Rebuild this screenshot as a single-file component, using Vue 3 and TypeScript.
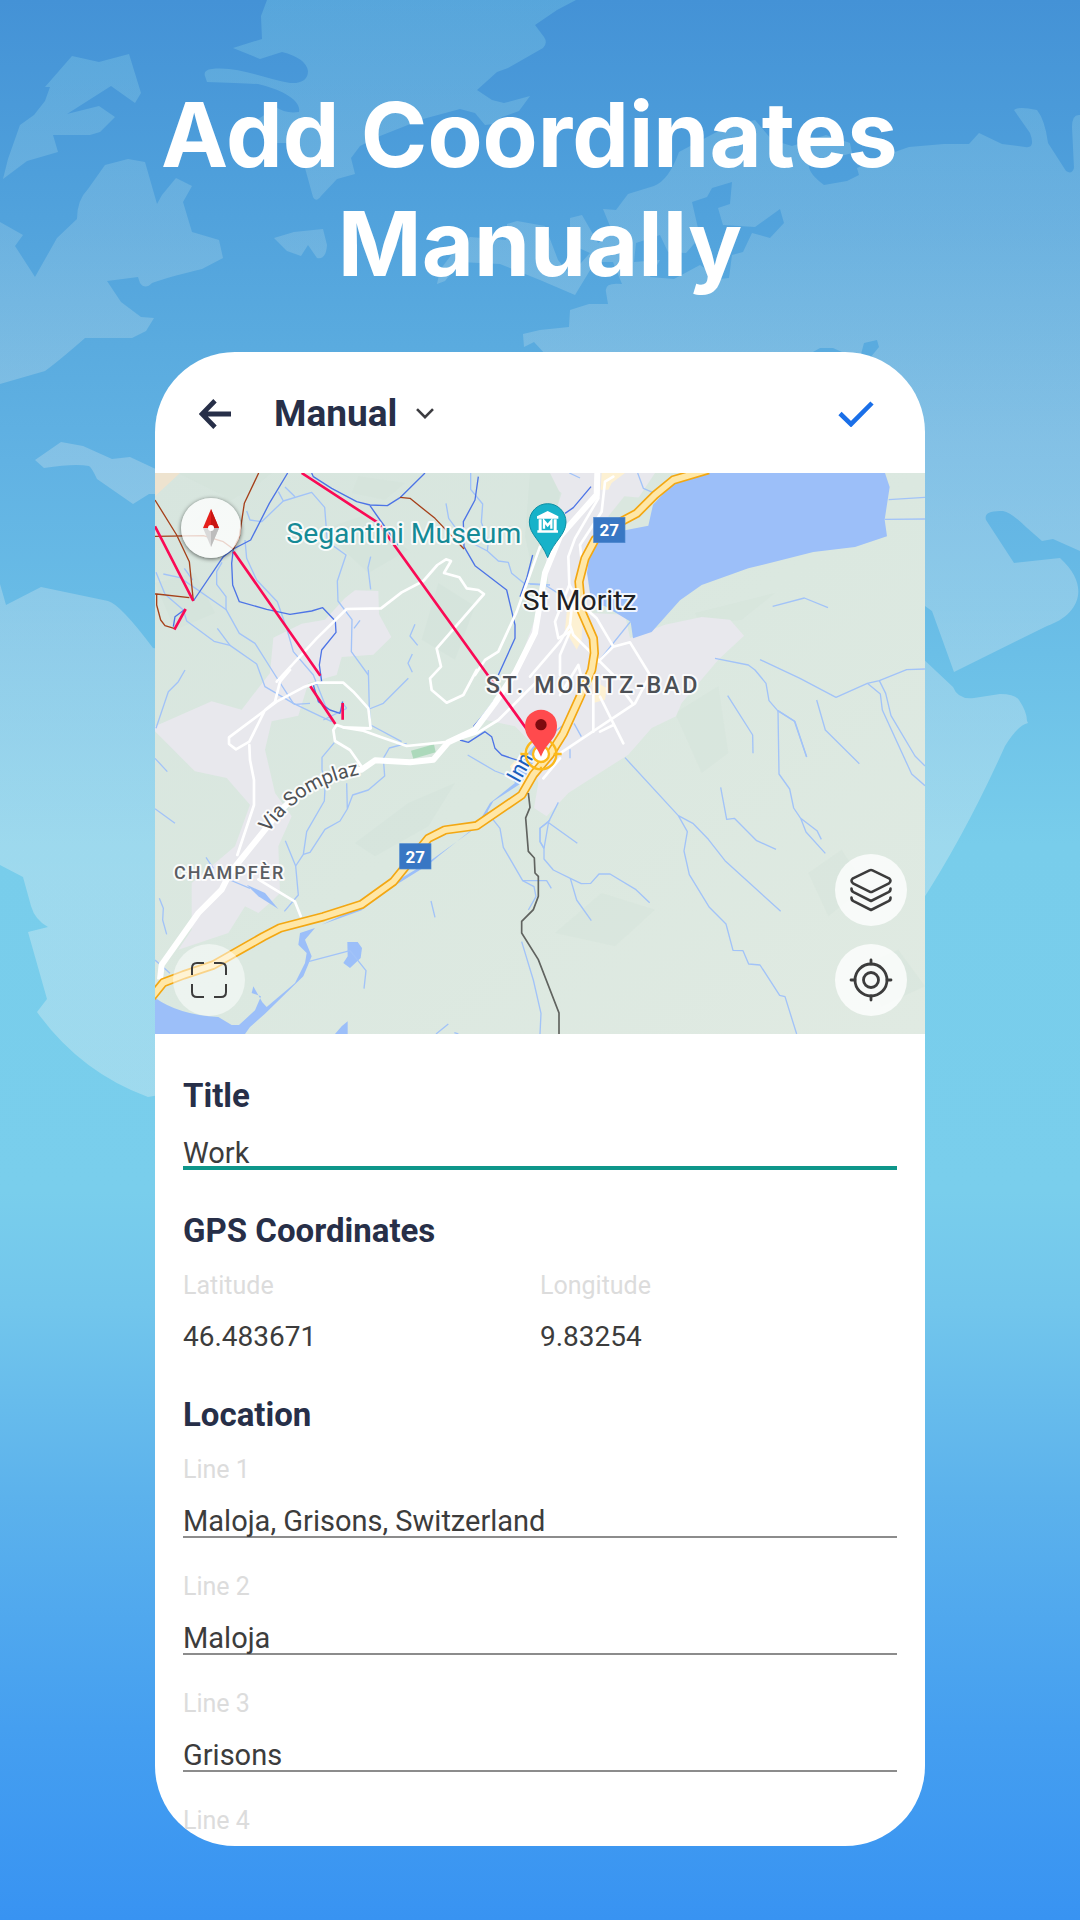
<script setup lang="ts">
import { ref } from 'vue'

interface LocationLine {
  id: string
  label: string
  value: string
}

interface Tile {
  x: number
  y: number
  paths: string[]
}

const mode = ref('Manual')
const title = ref('Work')
const latitude = ref('46.483671')
const longitude = ref('9.83254')

const lines = ref<LocationLine[]>([
  { id: 'line-1', label: 'Line 1', value: 'Maloja, Grisons, Switzerland' },
  { id: 'line-2', label: 'Line 2', value: 'Maloja' },
  { id: 'line-3', label: 'Line 3', value: 'Grisons' },
  { id: 'line-4', label: 'Line 4', value: '' },
])

// Map geometry is kept in four quadrants, each with its own origin.
const streams: Tile[] = [
  {
    x: -15,
    y: -384,
    paths: [
      'M290,498 300,525 335,530 400,468 485,442 524,487 532,590 588,630 562,708 564,768 606,824 604,920 655,990',
      'M385,440 400,468M405,426 435,455M662,635 654,668 662,733M795,838 780,873 803,901M787,927 774,955 787,982M630,826 612,850',
      'M285,585 290,640 320,705 382,770 410,850 430,920 490,990 545,1130',
      'M216,652 200,680 200,718 228,755 228,793 268,865 315,895 375,990 430,1075 545,1130',
      'M40,687 90,698 230,795M18,682 45,748 100,795 110,828 192,889 240,901 320,957 345,1025 435,1078 480,1075',
      'M202,850 240,901M103,670 128,705M105,975 85,1010 55,1040 18,1150',
      'M962,384 962,433 998,477 994,532 1015,590 1012,618M888,475 896,520 940,580 1012,618 1045,648 1075,652 1085,685 1122,715 1200,720',
    ],
  },
  {
    x: 1125,
    y: -384,
    paths: [
      'M323,384 340,430 368,442M118,384 150,399M1076,464 1185,457M1064,523 1185,522M728,784 823,759 894,788',
      'M0,717 45,720 85,745M303,828 205,950M555,940 655,960 675,975 708,1015 717,1067 743,1097 795,1130 830,1236',
      'M690,944 810,1000 918,1057 1012,1015 1048,1007 1130,974 1185,972',
    ],
  },
  {
    x: -15,
    y: 591,
    paths: [
      'M655,0 658,117 700,100 775,25M658,117 662,165 755,215',
      'M553,218 516,262 516,300 526,335 523,393 470,485 460,553 437,588 445,675 403,724M590,340 592,417 570,453 525,478 480,547 460,553M592,417 608,375 655,360 704,318 700,265 718,234 770,220M406,512 437,588',
      'M15,265 52,305M15,416 75,460M28,685 40,715 38,750 50,793M168,562 190,595M240,630 300,655M843,693 855,742',
      'M475,875 600,842 648,902 642,956M953,255 1035,303 1080,320M1010,425 1050,475 1060,532 1118,632 1190,632 1204,655',
      'M1118,632 1152,650 1158,680 1135,720M1200,450 1170,475 1170,515 1182,535M1115,815 1150,930 1173,1030 1170,1092M895,1062 858,1092M913,1088 925,1092M15,870 60,910',
      'M590,115 520,150M575,95 590,115',
    ],
  },
  {
    x: 1125,
    y: 591,
    paths: [
      'M285,263 445,437 490,461 535,508 585,572 752,724M445,437 472,485 462,543 478,614 538,712 588,762 609,841 639,842 656,882 690,885 749,976 765,980 800,1092',
      'M593,77 668,195 669,250M744,122 747,312 779,357 791,414 812,445 861,482 874,508M812,445 828,486 886,550',
      'M744,122 793,153 830,261',
      'M860,90 886,180 988,281M1012,40 1051,72 1057,120 1145,312 1185,347M1048,32 1067,70 1083,137 1155,258 1185,288',
      'M572,352 590,448 613,445 680,512 738,538M85,397 56,455 42,535 42,567 70,600 121,625 154,641 182,640 207,612 240,612 318,659 359,698',
      'M121,625 140,690 184,752M56,458 142,520M56,455 30,475 30,515 42,535M120,238 120,265M132,160 154,200',
      'M145,80 100,165 55,200',
    ],
  },
]

const trails: Tile[] = [
  {
    x: -15,
    y: -384,
    paths: [
      'M413,384 358,475 302,585 250,612 220,635 130,768',
      'M250,612 245,655 248,720 268,770 350,793 420,808 485,798 518,788 556,828 558,862 515,915 508,960 515,1010 490,1020 505,1070 540,1095 570,1105 578,1070',
      'M485,384 490,395 545,430 620,470 660,480 712,482 750,458 825,384',
      'M660,482 690,525 745,600M985,395 975,465 940,530 942,605 975,662 1070,735 1095,840 1095,880 1045,990',
      'M1148,630 1130,700 1110,755M1035,1065 1000,1110 970,1145M105,793 75,815 70,845',
    ],
  },
  {
    x: 1125,
    y: -384,
    paths: ['M183,425 130,488 105,505'],
  },
  {
    x: -15,
    y: 591,
    paths: ['M930,210 955,217 1005,185 1025,200 1035,235 1055,255 1115,275'],
  },
]

const streets: Tile[] = [
  {
    x: -15,
    y: -384,
    paths: [
      'M1170,605 1100,800 1045,920 1005,945 975,990',
      'M380,1010 500,880 590,792 693,790 755,742 820,708 862,660 888,643 903,648 882,684 928,697 950,730 985,735 1002,747 860,910 873,965 840,1000 845,1035 890,1073 940,1050 980,975',
    ],
  },
  {
    x: 1125,
    y: -384,
    paths: [
      'M250,395 225,410 215,500 150,600 155,650M205,384 205,460 135,580 115,635 118,720 75,830 85,880 120,860',
      'M118,720 130,740 120,840 90,890 0,995M120,840 130,870 180,920 250,990M155,780 200,820 250,905 300,892 360,990 315,1075 90,1225M250,905 205,950',
      'M90,990 90,930 120,860M90,1050 145,960 155,1000M190,1050 190,1160M210,1055 280,1195M285,1045 310,1078M210,1160 250,1140',
    ],
  },
  {
    x: -15,
    y: 591,
    paths: [
      'M420,0 390,35 375,95 345,120 298,215 258,238 237,222 237,202 380,95 460,52 500,38 580,38 610,65 655,115 662,175 580,172 560,165 550,180 555,213 600,240 635,290',
      'M660,175 620,175M580,172 640,182 690,200 770,228 900,215 980,190 1045,150 1170,25',
      'M298,225 300,270 312,330 312,405 262,555M325,628 435,695 452,738M1180,325 1230,265',
    ],
  },
]
</script>

<template>
  <main class="page">
    <svg class="world" viewBox="0 0 1080 1920" preserveAspectRatio="xMidYMin slice" aria-hidden="true">
      <defs>
        <linearGradient id="land" gradientUnits="userSpaceOnUse" x1="0" y1="0" x2="0" y2="1100">
          <stop offset="0" stop-color="#a0f0f0" stop-opacity=".21" />
          <stop offset=".2" stop-color="#e8f8f0" stop-opacity=".17" />
          <stop offset=".4" stop-color="#fff8f0" stop-opacity=".22" />
          <stop offset=".8" stop-color="#fff8f4" stop-opacity=".28" />
          <stop offset="1" stop-color="#fff8f4" stop-opacity=".28" />
        </linearGradient>
      </defs>
      <g fill="url(#land)" fill-rule="evenodd">
        <path d="M45,87 72,56 99,62 129,54 141,93 135,103 111,86 67,114 99,106 115,117 100,132 90,135 53,135 58,152 27,161 3,179 8,159 20,125 34,115 45,101 50,87Z" />
        <path d="M0,222 23,235 15,246 35,277 57,238 77,219Q77,200 88,189L105,165 128,159 145,162 157,204 162,195 176,178 192,186 183,202 192,232 219,240 223,258 202,269Q168,277 152,283 145,290 140,283L138,277 107,281 121,302 141,317 154,318 146,331 132,338 85,338Q60,360 45,371L0,384Z" />
        <path d="M267,0 261,16 262,39 233,48 260,59 282,52Q306,58 308,71 308,84 290,83C265,79 238,66 212,69Q203,70 205,76L207,82Q240,83 258,84C280,89 302,100 299,112Q285,114 276,107L257,120 270,143 286,143 305,168 313,197Q316,203 321,196L337,179 355,174 351,158 360,146 380,136 423,119 460,109 475,113 485,125 493,124 502,117 519,111 530,96 504,103 492,100 477,90 497,72 508,68 543,48Q548,43 544,37L535,25 557,10 576,0Z" />
        <path d="M274,238 294,232 323,229 327,245Q326,260 317,258L308,245 301,256 287,251Z" />
        <path d="M1080,115Q1072,114 1072,127L1074,168Q1072,175 1066,171L1048,143Q1045,120 1037,110 1018,106 1014,110L1030,133Q1036,149 1025,147L1002,144 979,133 969,144 944,144 909,147Q896,151 884,157L857,168 859,175 847,181 824,185Q808,173 809,165L852,153 850,143 826,135 792,146 772,140 755,120 726,127 679,152Q669,180 654,186L628,194 616,210 603,209 612,231 598,243 582,215 570,218 570,244 590,253 570,275 558,260 545,226 517,221 507,224 506,240 470,237 455,250 440,270 437,284 445,281 460,262 500,264 540,280 575,295 595,262 613,262 622,284 Q604,282 606,292L608,304 589,304 570,310 569,327 540,330 523,334 524,347 534,342 547,356 650,560 925,606 932,611 954,672 1047,626C1077,616 1093,588 1060,558L1014,563 986,520Q983,510 1003,511 1012,513 1026,527L1042,541 1053,539 1080,551ZM692,202 707,197 712,188 732,182 730,204 718,208 723,225 755,227 780,209 784,223 770,238 752,233 743,252 732,255 729,278 720,279 700,265 674,279 650,277 660,260 634,262 636,243 660,235 668,252 686,253 700,237ZM813,352 820,348 833,348 842,352ZM861,354 864,343 877,340 879,347 870,358Z" />
        <path d="M35,460 61,442 83,446 112,459 130,457 160,471 160,494 149,494 133,504 97,479 Q92,468 89,466 75,463 44,468Z" />
        <path d="M0,584 6,605 41,587 108,601Q120,604 153,648L165,650 165,1094 148,1097Q80,1072 37,1012L47,999 28,932 48,927Q35,920 31,906L23,877 0,865Z" />
        <path d="M920,656 953,687Q958,700 974,698L1000,694Q1015,694 1019,700 1027,712 1027,721L1028,723Q1018,725 1005,746 965,835 920,904Z" />
      </g>
    </svg>

    <h1 class="headline">Add Coordinates&nbsp;<br />Manually</h1>

    <section class="card">
      <header class="bar">
        <button class="icon-button" type="button" aria-label="Back">
          <svg width="32" height="30" viewBox="0 0 32 30">
            <path d="M16,1.8 3,15 16,28.200M2.500,15H32" fill="none" stroke="#272f48" stroke-width="4.800" />
          </svg>
        </button>
        <div class="mode">
          <select v-model="mode" class="mode-select" aria-label="Entry mode">
            <option value="Manual">Manual</option>
          </select>
          <svg width="18" height="11" viewBox="0 0 18 11" aria-hidden="true">
            <path d="M1,1.200 9,9.200 17,1.200" fill="none" stroke="#3c3c40" stroke-width="2.600" />
          </svg>
        </div>
        <button class="icon-button confirm" type="button" aria-label="Save">
          <svg width="36" height="26" viewBox="0 0 36 26">
            <path d="M2,12.500 13,23.200 34,2" fill="none" stroke="#1a6fe8" stroke-width="4.600" />
          </svg>
        </button>
      </header>

      <div class="map">
        <svg class="map-art" viewBox="0 0 2310 1683" role="img" aria-label="Map of St Moritz">
          <defs>
            <linearGradient id="terrain" x1="0" y1="0" x2="1" y2="1">
              <stop offset="0" stop-color="#d7e5de" />
              <stop offset=".5" stop-color="#dbe8e0" />
              <stop offset="1" stop-color="#e0eae2" />
            </linearGradient>
            <path id="somplaz" d="M340,1080Q392,1010 455,965 540,910 680,895" />
          </defs>
          <rect width="2310" height="1683" fill="url(#terrain)" />

          <g fill="#cfe0d8" opacity=".3">
            <path d="M70,0 210,70 110,150 300,40 350,0ZM610,10 750,30 690,80 590,60ZM500,170 620,130 760,230 640,300ZM850,330 960,400 900,560 800,500ZM600,1110 760,990 900,930 820,1060 660,1150Z" />
            <path d="M0,330 120,300 180,420 60,470ZM1620,420 1860,360 1760,440 1640,455ZM1560,720 1690,640 1720,840 1640,900ZM1200,1380 1340,1260 1500,1310 1380,1420ZM1960,1200 2060,1130 2130,1240 2020,1330ZM2120,1480 2230,1430 2310,1540 2180,1600Z" />
          </g>

          <path d="M0,0H75L0,70Z" fill="#eee3cf" />
          <g fill="#e8e8ed">
            <path d="M355,494 440,452 510,440 570,375 600,352 670,354 672,424 709,492 655,545 560,552 545,606 460,630 430,728 350,745 330,830 360,960 410,1030 370,1120 375,1260 355,1280 310,1320 270,1300 220,1380 70,1430 110,1370 110,1230 240,1120 285,995 215,915 120,895 0,775 0,760 170,685 260,710 345,600Z" />
            <path d="M1130,0H1500L1440,90 1380,160 1300,330 1310,420 1410,425 1425,495 1530,455 1640,432 1725,440 1767,488 1690,560 1580,690 1563,730 1490,765 1420,845 1240,960 1175,1030 1137,1005 1150,930 1120,800 1080,760 990,740 1080,600 1180,330 1170,220 1220,60Z" />
          </g>
          <path d="M1125,0H1185L1215,60 1190,200 1130,280 1110,190Z" fill="#d5e4dc" />
          <path d="M1408,70 1500,78 1485,155 1395,180 1360,130Z" fill="#dae7df" />
          <path d="M1340,0H1410L1370,30 1360,50 1337,50ZM1240,370 1285,375 1280,500 1265,530 1230,470ZM1310,620 1355,645 1350,680 1315,690ZM1065,880 1110,830 1160,870 1100,950Z" fill="#fdf1d3" />
          <path d="M768,833 837,814 842,838 775,857Z" fill="#acd9bb" />

          <g fill="#9cbff9">
            <path d="M1560,24 1640,0H2190L2204,42 2189,140 2196,190 2100,222 1975,237 1780,286 1640,336 1575,382 1490,477 1434,496 1427,446 1350,400 1310,390 1296,300 1310,200 1410,172 1480,158 1494,95Z" />
            <path d="M0,1574Q70,1625 190,1632L230,1656H252L300,1612 318,1570 290,1560 295,1540 322,1588 335,1602 420,1530 450,1470 455,1440 430,1415 435,1380 480,1365 450,1400 470,1450 445,1510 330,1622 285,1662 270,1683H0Z" />
            <path d="M577,1407H608L621,1425 617,1455 585,1485 565,1470 578,1450ZM540,1683 560,1660 578,1645V1683Z" />
            <path d="M965,1058 1005,990 1080,930 1065,905 1160,790 1190,770 1100,930 1015,985 975,1055 830,1160 740,1215 620,1312 500,1355 620,1300 820,1175 850,1150Z" />
            <path d="M275,1235 330,1260 370,1308 310,1270Z" />
          </g>

          <g fill="none" stroke="#a2c3f8" stroke-width="4" stroke-linejoin="round">
            <g v-for="(tile, i) in streams" :key="i" :transform="`translate(${tile.x} ${tile.y})`">
              <path v-for="d in tile.paths" :key="d" :d="d" />
            </g>
          </g>
          <g fill="none" stroke="#4d74e6" stroke-width="4" stroke-linejoin="round">
            <g v-for="(tile, i) in trails" :key="i" :transform="`translate(${tile.x} ${tile.y})`">
              <path v-for="d in tile.paths" :key="d" :d="d" />
            </g>
          </g>
          <g fill="none" stroke="#a5401a" stroke-width="4" stroke-linejoin="round" transform="translate(-15 -384)">
            <path d="M326,384 283,475 268,575 250,612 220,590 160,572 15,574M15,465 80,570 118,650 130,768M118,758 20,747 20,780 32,825 45,842 72,850M15,747 20,747M750,457 780,460 855,520 942,612" />
          </g>
          <g fill="none" stroke="#fff" stroke-width="8" stroke-linejoin="round" stroke-linecap="round">
            <g v-for="(tile, i) in streets" :key="i" :transform="`translate(${tile.x} ${tile.y})`">
              <path v-for="d in tile.paths" :key="d" :d="d" />
            </g>
          </g>
          <g fill="none" stroke="#fff" stroke-linejoin="round">
            <path stroke-width="18" d="M15,1520 20,1475 130,1320 200,1250 225,1200 330,1070Q440,920 575,892L620,890 660,862 765,868 835,860 880,808 960,770 1020,690 1080,600 1140,480 1170,300 1215,190 1325,65 1327,0" />
          </g>

          <g fill="none" stroke-linejoin="round">
            <g stroke="#f3a712" stroke-width="28">
              <path id="highway" d="M-10,1572 25,1529 85,1506 175,1476 325,1391 375,1365 505,1331 620,1294 715,1226 820,1096 870,1071 965,1058 1100,966 1135,905 1185,845 1225,781 1275,671 1310,591 1318,541 1315,496 1280,416 1272,326 1290,256 1320,200 1400,145 1445,121 1500,66 1555,21 1660,-10" />
            </g>
            <use href="#highway" stroke="#ffe7a6" stroke-width="18" />
          </g>
          <path d="M1120,960 1125,1003 1112,1035 1120,1135 1138,1155 1140,1200 1150,1210V1270L1135,1310 1100,1345V1380L1150,1460 1212,1620V1683" fill="none" stroke="#60635f" stroke-width="5" />

          <path d="M0,160 115,384M92,408 58,470M236,236 496,608M466,640 541,753M563,690V740M440,0 670,150 1158,828" fill="none" stroke="#fa0a55" stroke-width="8" />

          <g fill="#3877c4" stroke="#4f89d0" stroke-width="2">
            <rect x="1316" y="133" width="94" height="76" />
            <rect x="734" y="1112" width="94" height="76" />
          </g>
          <g class="shield">
            <text x="1363" y="190">27</text>
            <text x="781" y="1169">27</text>
          </g>

          <g class="place">
            <text class="poi" x="394" y="210">Segantini Museum</text>
            <text class="town" x="1103" y="412">St Moritz</text>
            <text class="suburb" x="992" y="659">ST. MORITZ-BAD</text>
            <text class="village" x="57" y="1217">CHAMPFÈR</text>
            <text class="street"><textPath href="#somplaz">Via Somplaz</textPath></text>
            <text class="river" transform="translate(1092 933) rotate(-61)">Inn</text>
          </g>

          <g transform="translate(1178 147)">
            <path d="M-55,0A55,55 0 0 1 55,0C55,38 20,55 0,107 -20,55 -55,38 -55,0Z" fill="#17b2c9" stroke="#0e8ea3" stroke-width="3" />
            <path d="M-32,-10V-17L0,-33 32,-17V-10ZM-27,-8H-18V25H-27ZM18,-8H27V25H18ZM-31,25H31V32H-31Z" fill="#fff" />
            <path d="M-11,20V-3L0,10 11,-3V20" fill="none" stroke="#fff" stroke-width="7" />
          </g>

          <g transform="translate(1158 843)">
            <g fill="none" stroke="#fbb91b" stroke-width="7">
              <circle r="46" />
              <circle r="24" fill="#fff" />
              <path d="M-62,0H-38M38,0H62M0,38V48" />
            </g>
            <path d="M-48,-85A48,48 0 0 1 48,-85C48,-45 20,-40 0,8 -20,-40 -48,-45 -48,-85Z" fill="#ff4a4d" />
            <circle cy="-88" r="17" fill="#7d0b0f" />
          </g>
        </svg>

        <button class="round compass" type="button" aria-label="Compass">
          <svg width="60" height="60" viewBox="0 0 60 60">
            <path d="M30,11 38,30H22Z" fill="#e5201b" />
            <path d="M30,11 38,30H30Z" fill="#c91612" />
            <path d="M22,30H38L30,49Z" fill="#d9d9d9" />
            <path d="M30,30H38L30,49Z" fill="#bdbdbd" />
            <circle cx="30" cy="30" r="3" fill="#fff" />
          </svg>
        </button>
        <button class="round expand" type="button" aria-label="Full screen">
          <svg width="38" height="38" viewBox="0 0 38 38" fill="none" stroke="#3c3c3c" stroke-width="2">
            <path d="M2,14V7Q2,2 7,2H14M24,2H31Q36,2 36,7V14M36,23V31Q36,36 31,36H24M14,36H7Q2,36 2,31V23" />
          </svg>
        </button>
        <div class="tools">
          <button class="round" type="button" aria-label="Map layers">
            <svg width="44" height="44" viewBox="0 0 44 44" fill="none" stroke="#3c3c3c" stroke-width="2.600" stroke-linecap="round" stroke-linejoin="round">
              <path d="M20.500,2.400Q22,1.700 23.500,2.400L40,10.300Q43,12.800 40,15.300L23.500,23.600Q22,24.400 20.500,23.600L4,15.300Q1,12.800 4,10.300Z" />
              <path d="M2.500,20.500Q2.300,23 4.500,24.200L22,33 39.500,24.200Q41.700,23 41.500,20.500M2.500,29.500Q2.300,32 4.500,33.200L22,42 39.500,33.200Q41.700,32 41.500,29.500" />
            </svg>
          </button>
          <button class="round" type="button" aria-label="My location">
            <svg width="44" height="44" viewBox="0 0 44 44" fill="none" stroke="#3c3c3c" stroke-width="2.800" stroke-linecap="round">
              <circle cx="22" cy="22" r="16" />
              <circle cx="22" cy="22" r="7.500" />
              <path d="M22,2V6M22,38V42M2,22H6M38,22H42" />
            </svg>
          </button>
        </div>
      </div>

      <form class="form" @submit.prevent>
        <section class="group">
          <h2><label for="title">Title</label></h2>
          <input id="title" v-model="title" class="input active" type="text" />
        </section>

        <section class="group">
          <h2>GPS Coordinates</h2>
          <div class="pair">
            <div class="field">
              <label for="latitude">Latitude</label>
              <input id="latitude" v-model="latitude" class="input plain" type="text" />
            </div>
            <div class="field">
              <label for="longitude">Longitude</label>
              <input id="longitude" v-model="longitude" class="input plain" type="text" />
            </div>
          </div>
        </section>

        <section class="group">
          <h2>Location</h2>
          <div class="lines">
            <div v-for="line in lines" :key="line.id" class="field">
              <label :for="line.id">{{ line.label }}</label>
              <input :id="line.id" v-model="line.value" class="input" type="text" />
            </div>
          </div>
        </section>
      </form>
    </section>
  </main>
</template>

<style>
body {
  margin: 0;
}
</style>

<style scoped>
.page {
  position: relative;
  box-sizing: border-box;
  display: flex;
  flex-direction: column;
  height: 100vh;
  padding: 80px 155px 74px;
  overflow: hidden;
  background: linear-gradient(
    #4492d6 0%,
    #4e9fdb 9%,
    #5aabdf 18%,
    #61b2e3 24%,
    #6bbfe7 34%,
    #78cdeb 44%,
    #79ceec 62%,
    #72c6ec 68%,
    #5cb2ec 78%,
    #459ff0 90%,
    #3893f2 100%
  );
  font-family: Roboto, "Liberation Sans", sans-serif;
}

.world {
  position: absolute;
  inset: 0;
  width: 100%;
  height: 100%;
}

.headline {
  position: relative;
  margin: 0 0 54px;
  color: #fff;
  font: 700 90px/109px Inter, "Liberation Sans", sans-serif;
  text-align: center;
  white-space: nowrap;
}

.card {
  position: relative;
  flex: 1;
  min-height: 0;
  overflow: hidden;
  border-radius: 80px;
  background: #fff;
}

.bar {
  box-sizing: border-box;
  display: flex;
  align-items: center;
  height: 121px;
  padding: 2px 51px 0 44px;
}

.icon-button {
  display: flex;
  padding: 0;
  border: 0;
  background: none;
}

.mode {
  display: flex;
  align-items: center;
  gap: 18px;
  margin-left: 43px;
}

.mode-select {
  appearance: none;
  padding: 0;
  border: 0;
  background: none;
  color: #272f48;
  font: 700 37px/44px Roboto, "Liberation Sans", sans-serif;
}

.confirm {
  margin-left: auto;
}

.map {
  position: relative;
}

.map-art {
  display: block;
  width: 100%;
}

.place {
  font-family: Roboto, "Liberation Sans", sans-serif;
  paint-order: stroke;
  stroke: #fff;
  stroke-opacity: 0.85;
  stroke-width: 12px;
  stroke-linejoin: round;
}

.poi {
  fill: #158a96;
  font-size: 85px;
}

.town {
  fill: #202124;
  font-size: 85px;
}

.suburb {
  fill: #4c5055;
  font-size: 70px;
  font-weight: 500;
  letter-spacing: 8px;
}

.village {
  fill: #5a5d62;
  font-size: 54px;
  font-weight: 500;
  letter-spacing: 6px;
}

.street {
  fill: #4f5256;
  font-size: 60px;
}

.river {
  fill: #1b5fbd;
  font-size: 66px;
}

.shield {
  fill: #fff;
  font: 700 51px Roboto, "Liberation Sans", sans-serif;
  text-anchor: middle;
}

.round {
  display: flex;
  align-items: center;
  justify-content: center;
  width: 72px;
  height: 72px;
  padding: 0;
  border: 0;
  border-radius: 50%;
  background: rgb(255 255 255 / 78%);
}

.compass {
  position: absolute;
  top: 25px;
  left: 26px;
  width: 60px;
  height: 60px;
  box-shadow: 0 1px 4px rgb(0 0 0 / 60%);
}

.expand {
  position: absolute;
  bottom: 18px;
  left: 18px;
  background: rgb(255 255 255 / 50%);
}

.tools {
  position: absolute;
  right: 18px;
  bottom: 18px;
  display: flex;
  flex-direction: column;
  gap: 18px;
}

.form {
  display: flex;
  flex-direction: column;
  gap: 41px;
  padding: 42px 28px 0;
}

.group {
  display: flex;
  flex-direction: column;
  gap: 20px;
}

h2 {
  margin: 0;
  color: #272f48;
  font-size: 33px;
  font-weight: 700;
  line-height: 40px;
}

.field {
  display: flex;
  flex-direction: column;
  gap: 19px;
}

.field label {
  color: #dcdcdc;
  font-size: 25px;
  line-height: 30px;
}

.input {
  box-sizing: border-box;
  width: 100%;
  height: 34px;
  padding: 0;
  border: 0;
  outline: 0;
  background: none;
  box-shadow: inset 0 -2px #8c8c8c;
  color: #3c3c3c;
  font: 400 29px/34px Roboto, "Liberation Sans", sans-serif;
}

.input.active {
  box-shadow: inset 0 -4px #0e968a;
}

.input.plain {
  box-shadow: none;
  font-size: 28px;
}

.pair {
  display: grid;
  grid-template-columns: 1fr 1fr;
}

.lines {
  display: flex;
  flex-direction: column;
  gap: 34px;
}
</style>
